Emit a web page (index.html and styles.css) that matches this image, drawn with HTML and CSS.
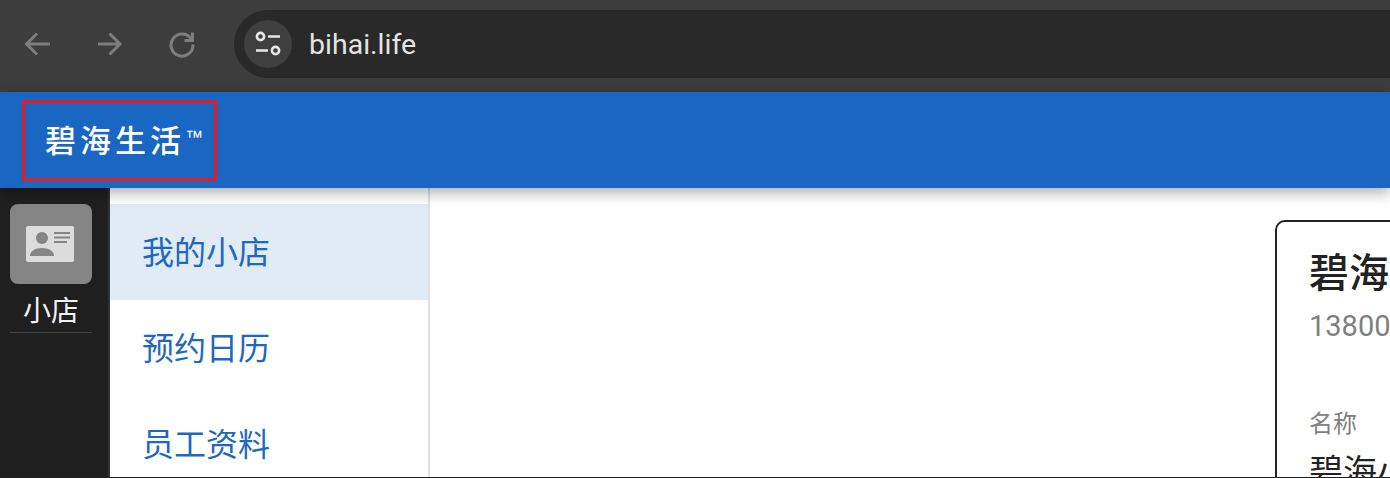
FILE: index.html
```html
<!DOCTYPE html>
<html lang="zh">
<head>
  <meta charset="UTF-8" />
  <title>碧海生活</title>
  <meta name="viewport" content="width=device-width, initial-scale=1" />
  <link rel="stylesheet" href="styles.css">
</head>
<body>
  <div class="page">
    <!-- browser chrome -->
    <div class="toolbar">
      <div class="nav-btns">
        <svg class="nav-icon" viewBox="0 0 28 28"><path d="M26 14H3M13 3.500 2.500 14 13 24.500"/></svg>
        <svg class="nav-icon" viewBox="0 0 28 28"><path d="M2 14h22M13.500 3.500 24 14 13.500 24.500"/></svg>
        <svg class="nav-icon" viewBox="0 0 28 28"><path d="M23.500 9.500A11 11 0 1 0 25 14.500M24.500 2.500v8h-8"/></svg>
      </div>
      <div class="address">
        <div class="site-info">
          <svg viewBox="0 0 28 28" width="28" height="28"><circle cx="6.500" cy="6.500" r="3.600"/><path d="M14 6.500h12M2 20.500h12"/><circle cx="21.500" cy="20.500" r="3.600"/></svg>
        </div>
        <span class="url">bihai.life</span>
      </div>
    </div>

    <header class="appbar">
      <div class="brand">碧海生活<span class="tm">™</span></div>
    </header>

    <div class="content">
      <aside class="rail">
        <div class="rail-tile">
          <svg viewBox="0 0 48 36" width="48" height="36">
            <rect width="48" height="36" rx="2" fill="#dcdcdc"/>
            <circle cx="16" cy="12" r="6" fill="#858585"/>
            <path d="M4 30c0-5 5-8 12-8s12 3 12 8z" fill="#858585"/>
            <path d="M28 7h16M28 11.500h16M28 16h13" stroke="#858585" stroke-width="2"/>
          </svg>
        </div>
        <div class="rail-label">小店</div>
      </aside>

      <nav class="menu">
        <a class="menu-item active" href="#">我的小店</a>
        <a class="menu-item" href="#">预约日历</a>
        <a class="menu-item" href="#">员工资料</a>
      </nav>

      <main class="main">
        <section class="card">
          <h2 class="card-title">碧海小店</h2>
          <div class="card-phone">13800138000</div>
          <div class="field-label">名称</div>
          <div class="field-value">碧海小店</div>
        </section>
      </main>
    </div>
  </div>
</body>
</html>
```

FILE: styles.css
```css
html, body {
  margin: 0; padding: 0; height: 100%;
  font-family: Roboto, 'Noto Sans CJK SC', sans-serif;
  background: #fff;
  overflow: hidden;
}
.page {
  height: 100vh;
  display: flex;
  flex-direction: column;
  overflow: hidden;
  box-sizing: border-box;
  border-bottom: 1px solid #222;
}
/* browser bar */
.toolbar {
  height: 92px;
  flex: none;
  box-sizing: border-box;
  padding: 10px 0 14px 24px;
  background: #3d3d3d;
  display: flex;
  align-items: stretch;
}
.nav-btns {
  display: flex;
  align-items: center;
  gap: 44px;
  width: 210px;
  flex: none;
}
.nav-icon {
  width: 28px;
  height: 28px;
  fill: none;
  stroke: #7d7d7d;
  stroke-width: 3;
}
.address {
  flex: 1;
  background: #292929;
  border-radius: 34px 0 0 34px;
  display: flex;
  align-items: center;
  padding-left: 10px;
}
.site-info {
  width: 48px;
  height: 48px;
  border-radius: 50%;
  background: #3f3f3f;
  display: flex;
  align-items: center;
  justify-content: center;
}
.site-info svg { fill: none; stroke: #e6e6e6; stroke-width: 2.600; }
.url {
  margin-left: 17px;
  color: #e4e4e4;
  font-size: 28.500px;
}
/* app header */
.appbar {
  height: 96px;
  flex: none;
  box-sizing: border-box;
  padding-top: 8px;
  padding-left: 22px;
  background: #1967c2;
  box-shadow: 0 4px 14px rgba(0,0,0,0.35);
  position: relative;
  z-index: 2;
}
.brand {
  width: 195px;
  height: 81px;
  box-sizing: border-box;
  border: 3px solid #e8191f;
  border-radius: 2px;
  padding-left: 20px;
  color: #fff;
  font-size: 31px;
  font-weight: 500;
  letter-spacing: 4px;
  line-height: 78px;
  white-space: nowrap;
}
.tm {
  font-family: 'Liberation Sans', sans-serif;
  font-size: 18px;
  font-weight: 400;
  letter-spacing: 0;
  line-height: 0;
  vertical-align: 9px;
}
.content {
  flex: 1;
  display: flex;
  min-height: 0;
}
/* left dark rail */
.rail {
  width: 110px;
  flex: none;
  box-sizing: border-box;
  background: #1f1f1f;
  border-right: 2px solid #333;
  padding: 16px 16px 0 10px;
}
.rail-tile {
  height: 80px;
  box-sizing: border-box;
  padding-right: 2px;
  background: #858585;
  border-radius: 8px;
  display: flex;
  align-items: center;
  justify-content: center;
}
.rail-label {
  height: 49px;
  line-height: 56px;
  box-sizing: border-box;
  border-bottom: 1px solid #444;
  text-align: center;
  color: #f2f2f2;
  font-size: 28px;
}
/* second level menu */
.menu {
  width: 320px;
  flex: none;
  box-sizing: border-box;
  padding-top: 16px;
  background: #fff;
  border-right: 2px solid #dfe1e5;
}
.menu-item {
  display: block;
  height: 96px;
  line-height: 98px;
  padding-left: 32px;
  color: #1f68be;
  font-size: 32px;
  text-decoration: none;
}
.menu-item.active { background: #e0ebf6; }
.main {
  flex: 1;
  min-width: 0;
  padding: 32px 0 0 845px;
  overflow: hidden;
}
.card {
  width: 600px;
  height: 400px;
  box-sizing: border-box;
  border: 2px solid #222;
  border-radius: 10px;
  padding: 25px 32px;
}
.card-title {
  margin: 0;
  color: #222;
  font-size: 40px;
  font-weight: 500;
  line-height: 54px;
  white-space: nowrap;
}
.card-phone {
  color: #808080;
  font-size: 29px;
  line-height: 36px;
  margin-top: 7px;
}
.field-label {
  margin-top: 62px;
  color: #808080;
  font-size: 24px;
  line-height: 36px;
}
.field-value {
  margin-top: 8px;
  color: #222;
  font-size: 34px;
  line-height: 44px;
  white-space: nowrap;
}
```
